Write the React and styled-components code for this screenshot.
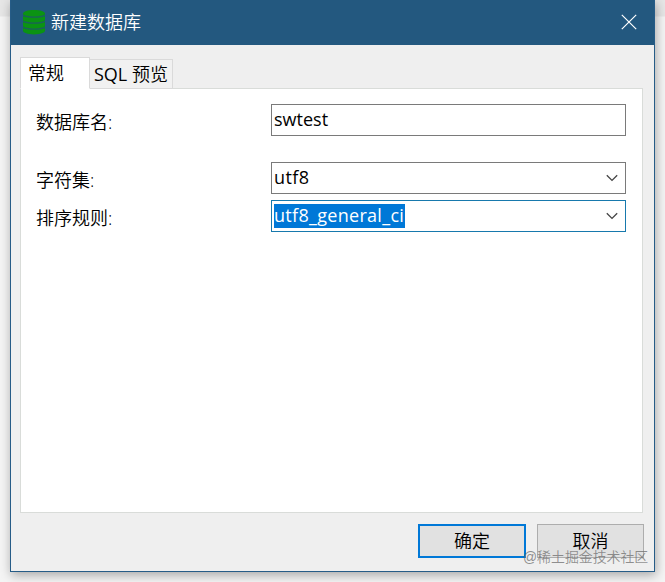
import React from 'react';
import styled, { createGlobalStyle } from 'styled-components';

const App = () => {
  return (
    <>
      <GlobalStyle />
      <Desktop>
        <Dialog>
          <TitleBar>
            <DatabaseIcon />
            <Title>新建数据库</Title>
            <CloseButton aria-label="关闭">
              <svg width="16" height="16" viewBox="0 0 16 16">
                <path d="M.8.8l14.4 14.4M15.2.8L.8 15.2" fill="none" stroke="#fff" strokeWidth="1.2" />
              </svg>
            </CloseButton>
          </TitleBar>
          <Body>
            <TabList>
              <Tab $active>常规</Tab>
              <Tab>
                <Latin>SQL</Latin> 预览
              </Tab>
            </TabList>
            <Panel>
              <Row $gap={26}>
                <Label>数据库名:</Label>
                <Field>
                  <Value $spacing={0}>swtest</Value>
                </Field>
              </Row>
              <Row $gap={6}>
                <Label>字符集:</Label>
                <Field>
                  <Value $spacing={0.4}>utf8</Value>
                  <Chevron />
                </Field>
              </Row>
              <Row $gap={0}>
                <Label>排序规则:</Label>
                <Field $focused>
                  <Value $selected $spacing={0.3}>
                    utf8_general_ci
                  </Value>
                  <Chevron />
                </Field>
              </Row>
            </Panel>
            <Footer>
              <Button $primary>确定</Button>
              <Button>取消</Button>
            </Footer>
          </Body>
        </Dialog>
        <Watermark>@稀土掘金技术社区</Watermark>
      </Desktop>
    </>
  );
};

const DatabaseIcon = () => (
  <svg width="22" height="25" viewBox="0 0 22 25">
    <path
      d="M0 3.6C0 1.6 4.9 0 11 0s11 1.6 11 3.6v17.2c0 2-4.9 3.6-11 3.6S0 22.8 0 20.8z"
      fill="#0b9313"
    />
    <path
      d="M0 5c2 2.7 20 2.7 22 0M0 11c2 2.7 20 2.7 22 0M0 17c2 2.7 20 2.7 22 0"
      fill="none"
      stroke="#1b6258"
      strokeWidth="1.3"
    />
  </svg>
);

const Chevron = () => (
  <svg width="12" height="8" viewBox="0 0 12 8">
    <path d="M.8 1.2L6 6.4l5.2-5.2" fill="none" stroke="#444" strokeWidth="1.3" />
  </svg>
);

export default App;

const GlobalStyle = createGlobalStyle`
  * {
    box-sizing: border-box;
  }
  body {
    margin: 0;
    overflow: hidden;
    font-family: 'Open Sans', 'Noto Sans CJK SC', sans-serif;
    font-size: 18px;
    font-weight: 350;
    line-height: 24px;
    color: #000;
  }
  svg {
    display: block;
    flex: none;
  }
`;

const Desktop = styled.div`
  position: relative;
  width: 665px;
  height: 582px;
  padding: 0 10px;
  overflow: hidden;
  background: linear-gradient(#e6e6e6 0 16px, #f4f4f4 17px);
`;

const Dialog = styled.div`
  display: flex;
  flex-direction: column;
  width: 645px;
  height: 572px;
  border: 1px solid #265c87;
  border-top: 0;
  background: #efefef;
  box-shadow: 1px 3px 10px rgba(0, 0, 0, 0.32);
`;

const TitleBar = styled.div`
  display: flex;
  align-items: center;
  flex: none;
  height: 45px;
  padding: 0 17px 1px 12px;
  background: #23587f;
`;

const Title = styled.div`
  flex: 1;
  margin-left: 6px;
  color: #fff;
`;

const CloseButton = styled.button`
  padding: 0;
  border: 0;
  background: none;
`;

const Body = styled.div`
  display: flex;
  flex-direction: column;
  flex: 1;
  padding: 12px 11px 13px 9px;
`;

const TabList = styled.div`
  display: flex;
  align-items: flex-end;
  height: 32px;
  margin-bottom: -1px;
`;

const Tab = styled.div`
  z-index: ${({ $active }) => ($active ? 1 : 0)};
  width: ${({ $active }) => ($active ? 70 : 84)}px;
  height: ${({ $active }) => ($active ? 32 : 30)}px;
  padding: ${({ $active }) => ($active ? '3px 0 0 7px' : '2px 0 0 4px')};
  margin-right: -1px;
  border: 1px solid #dadada;
  border-bottom-color: ${({ $active }) => ($active ? '#fff' : '#dadada')};
  background: ${({ $active }) => ($active ? '#fff' : '#f1f1f1')};
  white-space: nowrap;
`;

const Latin = styled.span`
  font-weight: 400;
`;

const Panel = styled.div`
  flex: 1;
  padding: 15px 16px 0 15px;
  border: 1px solid #d9dcd9;
  background: #fff;
`;

const Row = styled.div`
  display: flex;
  height: 32px;
  margin-bottom: ${({ $gap }) => $gap}px;
`;

const Label = styled.div`
  width: 235px;
  padding-top: 6px;
`;

const Field = styled.div`
  display: flex;
  align-items: center;
  justify-content: space-between;
  width: 355px;
  height: 32px;
  padding: 0 7px 0 2px;
  border: 1px solid ${({ $focused }) => ($focused ? '#1779ad' : '#7a7a7a')};
  background: #fff;
`;

const Value = styled.span`
  height: 24px;
  padding-right: 1px;
  background: ${({ $selected }) => ($selected ? '#0078d7' : 'transparent')};
  color: ${({ $selected }) => ($selected ? '#fff' : '#000')};
  font-weight: 400;
  letter-spacing: ${({ $spacing }) => $spacing}px;
  line-height: 22px;
`;

const Footer = styled.div`
  display: flex;
  justify-content: flex-end;
  gap: 11px;
  margin: 11px -1px 0 0;
`;

const Button = styled.button`
  width: ${({ $primary }) => ($primary ? 108 : 107)}px;
  height: 34px;
  padding: 0;
  border: ${({ $primary }) => ($primary ? '2px solid #0078d7' : '1px solid #adadad')};
  background: #e1e1e1;
  color: #000;
  font: inherit;
`;

const Watermark = styled.div`
  position: absolute;
  left: 523px;
  top: 547px;
  color: rgba(110, 110, 110, 0.75);
  font-family: 'Liberation Sans', 'Noto Sans CJK SC', sans-serif;
  font-size: 13.9px;
  line-height: 20px;
  white-space: nowrap;
`;
